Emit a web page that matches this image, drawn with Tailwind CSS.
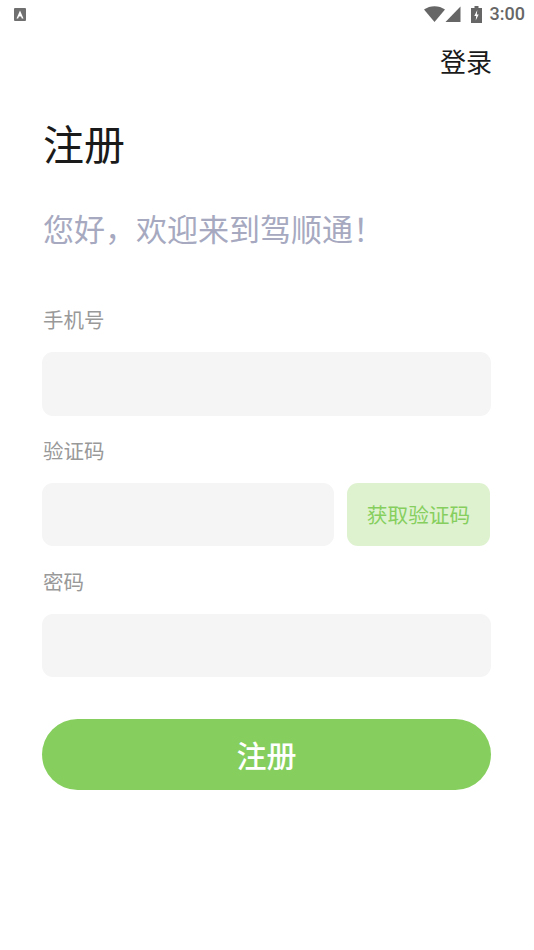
<!DOCTYPE html>
<html lang="zh-CN">
<head>
    <meta charset="UTF-8" />
    <meta name="viewport" content="width=device-width, initial-scale=1.0" />
    <title>注册</title>
    <script src="https://cdn.jsdelivr.net/npm/@tailwindcss/browser@4"></script>
</head>
<body class="bg-white font-['Noto_Sans_CJK_SC','Noto_Sans',sans-serif]">
    <div class="w-[534px] h-[950px] overflow-hidden">
        <!-- Status bar -->
        <div class="h-[28px] flex items-center justify-between pl-[14px] pr-[9px]">
            <div class="w-[12px] h-[13px] bg-[#6f6f6f] rounded-[1px] flex items-center justify-center">
                <svg width="8" height="9" viewBox="0 0 8 9"><path d="M4 0.5 L7.5 8.5 H5.8 L5.1 6.6 H2.9 L2.2 8.5 H0.5 Z" fill="#fff"/></svg>
            </div>
            <div class="flex items-center">
                <svg width="21" height="16" viewBox="0 0 21 16"><path d="M0 3.5 C6 -1 15 -1 21 3.5 L10.5 16 Z" fill="#666"/></svg>
                <svg width="16" height="16" viewBox="0 0 16 16" class="mr-[10px]"><path d="M15.5 0.5 V16 H0.5 Z" fill="#666"/></svg>
                <svg width="11" height="17" viewBox="0 0 11 17" class="mr-[8px]"><path d="M3.5 0 H7.5 V2 H11 V17 H0 V2 H3.5 Z" fill="#666"/><path d="M6.3 4 L3.3 10 H5.2 L4.7 14.5 L7.7 8.5 H5.8 Z" fill="#fff"/></svg>
                <span class="text-[18px] leading-[28px] font-medium text-[#666] font-['Roboto',sans-serif]">3:00</span>
            </div>
        </div>

        <div class="pl-[42px] pr-[43px]">
            <div class="flex justify-end mt-[14px] -mr-px">
                <span class="text-[26px] leading-[38px] text-[#1a1a1a]">登录</span>
            </div>

            <h1 class="text-[41px] leading-[56px] text-[#1a1a1a] mt-[34px] ml-px">注册</h1>
            <p class="text-[31px] leading-[44px] text-[#a6a9c0] mt-[36px] ml-px">您好，欢迎来到驾顺通！</p>

            <!-- Form -->
            <label class="block text-[20.5px] leading-[30px] text-[#999] mt-[54px] ml-px">手机号</label>
            <div class="h-[64px] bg-[#f5f5f5] rounded-[11px] mt-[18px]"></div>

            <label class="block text-[20.5px] leading-[30px] text-[#999] mt-[19px] ml-px">验证码</label>
            <div class="flex mt-[18px]">
                <div class="w-[292px] h-[63px] bg-[#f5f5f5] rounded-[11px]"></div>
                <div class="w-[143px] h-[63px] ml-[13px] bg-[#def2d0] rounded-[11px] flex items-center justify-center text-[20.7px] text-[#86cf5e]">获取验证码</div>
            </div>

            <label class="block text-[20.5px] leading-[30px] text-[#999] mt-[20px] ml-px">密码</label>
            <div class="h-[63px] bg-[#f5f5f5] rounded-[11px] mt-[18px]"></div>

            <button class="block w-full h-[71px] mt-[42px] rounded-full bg-[#86cf5e] text-white text-[30px] font-medium">注册</button>
        </div>
    </div>
</body>
</html>
